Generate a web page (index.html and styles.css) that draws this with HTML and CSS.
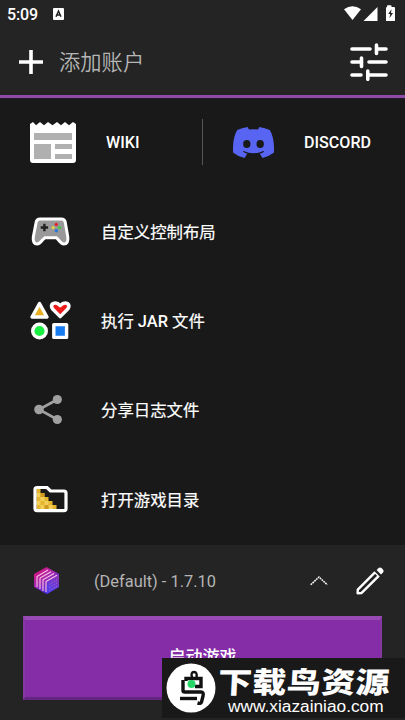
FILE: index.html
```
<!DOCTYPE html>
<html lang="zh-CN">
<head>
<meta charset="utf-8">
<title>Launcher</title>
<link rel="stylesheet" href="styles.css">
</head>
<body>
<div class="screen">
  <header class="top">
    <div class="status">
      <span class="clock">5:09</span>
      <svg class="badge" width="11" height="12" viewBox="0 0 11 12"><rect width="11" height="12" rx="1" fill="#fff"/><path d="M3 8.7 5.5 3 8 8.7M4 7h3" fill="none" stroke="#222" stroke-width="1.5"/></svg>
      <svg class="signals" width="51" height="17" viewBox="0 0 51 17" fill="#fff"><path d="M0 4.2Q8.5-1.8 17 4.2L8.5 15Z"/><path d="M33.5 2V16H19.5Z"/><path d="M43 2V1Q43 .3 43.8 .3H46.8Q47.5.3 47.5 1V2H50Q51 2 51 3V15.5Q51 16 50 16H43Q42 16 42 15.5V3Q42 2 43 2Z"/><path d="M47.5 4.3 44.2 9H46.2L45.5 13.2 49 8H47Z" fill="#222"/></svg>
    </div>
    <div class="account">
      <svg width="24" height="24" viewBox="0 0 24 24" stroke="#fff" stroke-width="3.6"><path d="M12 0V24M0 12H24"/></svg>
      <span class="account-name">添加账户</span>
      <svg class="settings" width="38" height="38" viewBox="0 0 38 38" fill="none" stroke="#fff" stroke-width="3.6" stroke-linecap="round"><path d="M2 6H20M28 6H36M2 19H11M19 19H36M2 32H11M19 32H36"/><path d="M26.5 2V10.5M11.5 15V23.5M17.8 28V36.3"/></svg>
    </div>
  </header>
  <main class="menu">
    <div class="split">
      <div class="item wiki">
        <svg width="46" height="42" viewBox="0 0 46 42"><path d="M0 2 3 0 6 3.2 10 0 14 3.2 18 0 22.5 3.2 27 0 31 3.2 35 0 39 3.2 43 0 46 2V38Q46 41 43 41H3Q0 41 0 38Z" fill="#fff"/><g fill="#b0b0b0"><path d="M4 11H42V18H4ZM4 22H21V37H4ZM25 22H42V27H25ZM25 32H42V37H25Z"/></g></svg>
        <span>WIKI</span>
      </div>
      <div class="item discord">
        <svg width="41" height="31" viewBox="0 0 41 31"><path d="M14.5 0Q9 .8 4.2 3Q-.5 10.5 0 25.4Q5 29.5 11.5 31L14.2 26.8Q11.8 26 9.8 24.8L10.7 24Q20.5 28.5 30.3 24L31.2 24.8Q29 26.2 26.8 26.8L29.5 31Q36 29.3 41 25.4Q41.5 10.5 36.8 3Q32 .8 26.5 0L25 2.6Q20.5 2 16 2.6Z" fill="#5865f2"/><ellipse cx="13.8" cy="17" rx="3.7" ry="4" fill="#191919"/><ellipse cx="27.2" cy="17" rx="3.7" ry="4" fill="#191919"/></svg>
        <span>DISCORD</span>
      </div>
    </div>
    <div class="item">
      <svg class="icon" width="46" height="46" viewBox="0 0 46 46"><path d="M10 11H31.5Q34.4 11 35.2 14L37.8 29Q38.6 36 33.8 36Q31.8 36 28.5 32L26.5 29.8H14.8L12.5 32Q9.3 36 7.2 36Q2.5 36 3.3 29L6.2 14Q7 11 10 11Z" fill="#999" stroke="#fff" stroke-width="3" stroke-linejoin="round"/><path d="M14.4 15.8V23.2M10.7 19.5H18.1" stroke="#222" stroke-width="2.4"/><circle cx="26.3" cy="16.5" r="1.7" fill="#df242d"/><circle cx="23.1" cy="19.6" r="1.7" fill="#dfd044"/><circle cx="29.5" cy="19.6" r="1.7" fill="#45c545"/><circle cx="26.3" cy="22.8" r="1.7" fill="#2876d8"/></svg>
      <span>自定义控制布局</span>
    </div>
    <div class="item">
      <svg class="icon" width="46" height="46" viewBox="0 0 46 46" stroke="#fff" stroke-width="3.4" stroke-linejoin="round"><path d="M9.5 5.5 17 19H2Z" fill="#e9ae22"/><path d="M30.2 18.6 22.6 11Q20.2 7.5 23 5.5Q26.8 3.6 30.2 7.7Q33.8 3.6 37.4 5.5Q40.2 7.5 37.8 11Z" fill="#ee1b1b"/><circle cx="9.5" cy="33" r="6.8" fill="#19ef42"/><rect x="23.8" y="26.6" width="12.8" height="12.8" fill="#187cf1"/></svg>
      <span>执行 <b>JAR</b> 文件</span>
    </div>
    <div class="item">
      <svg class="icon" width="46" height="46" viewBox="0 0 46 46" fill="#a0a0a0"><path d="M27.3 12.5 9 22.5 27.3 32.5" fill="none" stroke="#a0a0a0" stroke-width="2.6"/><circle cx="27.3" cy="12.5" r="4.6"/><circle cx="9" cy="22.5" r="4.8"/><circle cx="27.3" cy="32.5" r="4.6"/></svg>
      <span>分享日志文件</span>
    </div>
    <div class="item">
      <svg class="icon" width="46" height="46" viewBox="0 0 46 46"><path d="M6.5 13H10.5V17H14.5V21H18.5V25H22.5V29H26.5V33H6.5Z" fill="#e6b52e"/><path d="M6.5 17h4v4h-4zM10.5 21h4v4h-4zM6.5 25h4v4h-4zM14.5 25h4v4h-4zM10.5 29h4v4h-4zM18.5 29h4v4h-4z" fill="#f0d05a"/><path d="M10.5 17h4v4h-4zM14.5 29h4v4h-4z" fill="#d09a20"/><path d="M7 11.5H17L20.5 15H34Q36 15 36 17V32.5Q36 34.7 34 34.7H7Q5 34.7 5 32.5V13.5Q5 11.5 7 11.5Z" fill="none" stroke="#fff" stroke-width="3.2"/></svg>
      <span>打开游戏目录</span>
    </div>
  </main>
  <footer class="bottom">
    <div class="version">
      <svg width="27" height="28" viewBox="0 0 27 28"><defs><linearGradient id="cube" x1="0" y1="0" x2=".7" y2="1"><stop stop-color="#e80b69"/><stop offset=".5" stop-color="#a32ab4"/><stop offset="1" stop-color="#3430f5"/></linearGradient><linearGradient id="face" x1=".7" y1="0" x2=".2" y2="1"><stop stop-color="#8a35b8"/><stop offset="1" stop-color="#4a3df0"/></linearGradient></defs><path d="M13.5 0 26 7V20L13.5 27 1 20V7Z" fill="url(#cube)"/><path d="M14 15 26 8V20L14 27Z" fill="url(#face)"/><path d="M4 20V9.5L15 3M7 22V11L18 4.8M10 24V12.7L21 6.5M13 25V14.5L24 8.2" fill="none" stroke="#f9c3e0" stroke-width="1.1"/><path d="M16 17.5 24 13M16 20.5 24 16M16 23.5 24 19" stroke="#a77be8" stroke-width=".8" stroke-dasharray="1 1"/></svg>
      <span class="version-name">(Default) - 1.7.10</span>
      <svg class="chevron" width="18" height="10" viewBox="0 0 18 10" fill="none" stroke="#fff" stroke-width="1.5"><path d="M.7 8.8 9 1 17.3 8.8" stroke-dasharray="1.8 .7"/></svg>
      <svg class="pencil" width="28" height="28" viewBox="0 0 28 28"><path d="M1.6 26.3 1.8 22.6 19.2 5.2 22.8 8.8 5.4 26.1Z" fill="none" stroke="#fff" stroke-width="2.4" stroke-linejoin="round"/><path d="M18.3 3 25 9.7" stroke="#242424" stroke-width="1.7"/><path d="M20.6 3 22.6 1Q24.3-.4 26 1.5L26.7 2.2Q28.4 4 27 5.5L25 7.4Z" fill="#fff"/></svg>
    </div>
    <button class="launch">启动游戏</button>
  </footer>
  <aside class="watermark">
    <svg width="50" height="50" viewBox="0 0 50 50"><circle cx="25" cy="25" r="24.5" fill="#fff"/><g fill="none" stroke="#111" stroke-width="3.4"><path d="M26 14.5Q24.5 9 28 9Q31.5 9 30.5 14.5" stroke-width="2.4"/><path d="M20 18V15.5H35V23.5H29"/><path d="M17 17V27.5Q17 29 19 29H35Q38 29 37 33L35.5 39Q35 41 31.5 40"/><path d="M14 35.5H31"/></g><circle cx="25.5" cy="21" r="4" fill="#27d466"/></svg>
    <div class="brand"><strong>下载鸟资源</strong><span>www.xiazainiao.com</span></div>
  </aside>
</div>
</body>
</html>
```
FILE: styles.css
```
* { box-sizing: border-box; }
body { margin: 0; background: #191919; color: #fff; font-family: Roboto, "Noto Sans CJK SC", sans-serif; }
svg { display: block; flex: none; }
.screen { position: relative; width: 405px; height: 720px; overflow: hidden; display: flex; flex-direction: column; }
.top { height: 98px; background: #242424; border-bottom: 3px solid #8d4aa6; box-shadow: 0 1px #251829; flex: none; }
.status { height: 28px; display: flex; align-items: center; padding: 0 10px 0 7px; }
.clock { width: 46px; font-size: 16px; font-weight: 500; letter-spacing: -0.1px; }
.signals { margin: 0 0 0 auto; transform: translateY(-1px); }
.account { height: 68px; display: flex; align-items: center; padding: 0 17px 0 19px; }
.account-name { margin: 2px 0 0 16px; font-size: 21.3px; line-height: 30px; color: #b5b5b5; font-weight: 350; }
.settings { margin-left: auto; }
.menu { height: 447px; flex: none; display: grid; grid-template-rows: 89px repeat(4, 89.4px); }
.split { display: flex; }
.item { display: flex; align-items: center; font-size: 16.4px; font-weight: 400; padding-left: 30px; white-space: pre; }
.item > span { margin-top: -2px; -webkit-text-stroke: .2px #fff; }
.item b { font-weight: 500; -webkit-text-stroke: 0; }
.icon { margin: -1px 25px 0 0; }
.split .item { position: relative; width: 202px; font-size: 16.1px; font-weight: 500; }
.split .item > span { margin-top: 0; -webkit-text-stroke: 0; }
.wiki { gap: 30px; }
.split .discord { width: 203px; padding-left: 31px; gap: 30px; }
.wiki::after { content: ""; position: absolute; right: -1px; top: 21px; width: 1px; height: 46px; background: #555; }
.bottom { height: 175px; background: #242424; }
.version { height: 71px; display: flex; align-items: center; padding: 0 21px 0 33px; }
.version-name { margin: 2px 0 0 34px; color: #b5b5b5; font-size: 16.4px; }
.chevron { margin-left: auto; }
.pencil { margin-left: 28px; }
.launch { display: block; width: 359px; height: 84px; margin-left: 23px; padding: 0 0 4px; border: solid; border-width: 4px 2px 3px; border-color: #984bb5 #8538a1 #652681 #8538a1; background: #852da6; color: #fff; font: 500 17px/24px Roboto, "Noto Sans CJK SC", sans-serif; }
.watermark { position: absolute; left: 162px; top: 658px; width: 243px; height: 60px; background: #191919; display: flex; align-items: center; padding-left: 4px; }
.brand { display: flex; flex-direction: column; margin-left: 2px; padding-top: 5px; }
.brand strong { font-size: 34px; line-height: 32px; font-weight: 900; letter-spacing: .4px; white-space: nowrap; transform: translateY(1px) skewX(-3deg) scaleY(.86); }
.brand span { margin: -2px 0 0 10px; font: 17.3px/20px "Liberation Sans", sans-serif; }
```
